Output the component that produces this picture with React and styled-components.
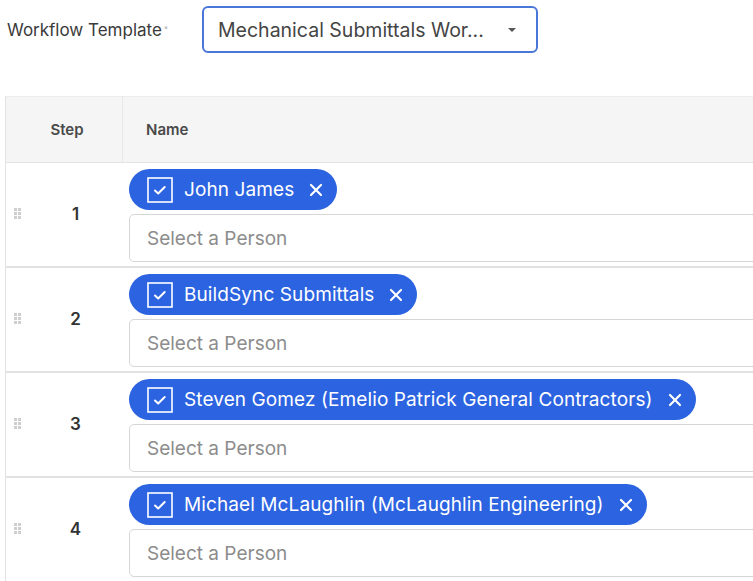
import React from 'react'
import styled, { createGlobalStyle } from 'styled-components'
import { X } from 'lucide-react'

const steps = [
    { step: 1, name: 'John James' },
    { step: 2, name: 'BuildSync Submittals' },
    { step: 3, name: 'Steven Gomez (Emelio Patrick General Contractors)' },
    { step: 4, name: 'Michael McLaughlin (McLaughlin Engineering)' }
]

export default function App() {
    return (
        <>
            <GlobalStyle />
            <Page>
                <TemplateRow>
                    <Label>Workflow Template<Req>*</Req></Label>
                    <Select>
                        <span>Mechanical Submittals Wor...</span>
                        <Caret />
                    </Select>
                </TemplateRow>
                <Table>
                    <HeaderRow>
                        <HeadCell center>Step</HeadCell>
                        <HeadCell>Name</HeadCell>
                    </HeaderRow>
                    {steps.map(({ step, name }) => (
                        <Row key={step}>
                            <StepCell>
                                <Handle>
                                    {Array.from({ length: 6 }).map((_, i) => <i key={i} />)}
                                </Handle>
                                <StepNum>{step}</StepNum>
                            </StepCell>
                            <NameCell>
                                <Chip>
                                    <CheckBox viewBox="0 0 26 26">
                                        <rect x="1" y="1" width="24" height="24" fill="none" stroke="#fff" strokeWidth="1.6" />
                                        <path d="M8 13.5l3.2 3 6.5-6.5" fill="none" stroke="#fff" strokeWidth="2" strokeLinecap="round" strokeLinejoin="round" />
                                    </CheckBox>
                                    <ChipText>{name}</ChipText>
                                    <X size={20} strokeWidth={2.6} color="#fff" />
                                </Chip>
                                <PersonInput>Select a Person</PersonInput>
                            </NameCell>
                        </Row>
                    ))}
                </Table>
            </Page>
        </>
    )
}

const GlobalStyle = createGlobalStyle`
    body{
        margin: 0;
        background: #fff;
        font-family: Inter, "Noto Sans", sans-serif;
        overflow: hidden;
    }
`

const Page = styled.div`
    padding: 6px 0 0 5px;
    width: 820px;
`

const TemplateRow = styled.div`
    display: flex;
    align-items: center;
    margin-bottom: 43px;
`

const Label = styled.div`
    width: 197px;
    padding-left: 2px;
    box-sizing: border-box;
    font-size: 17px;
    color: #3a3a3a;
    display: flex;
    align-items: flex-start;
`

const Req = styled.span`
    font-size: 8px;
    color: #aaa;
    margin-left: 2px;
    margin-top: 4px;
`

const Select = styled.div`
    width: 336px;
    height: 47px;
    box-sizing: border-box;
    border: 2px solid #4a76d8;
    border-radius: 6px;
    display: flex;
    align-items: center;
    justify-content: space-between;
    padding: 0 20px 0 14px;
    font-size: 19.5px;
    color: #444;
    white-space: nowrap;
`

const Caret = styled.span`
    width: 0;
    height: 0;
    border-left: 4px solid transparent;
    border-right: 4px solid transparent;
    border-top: 4px solid #555;
`

const Table = styled.div`
    border-left: 1px solid #e2e2e2;
    border-top: 1px solid #ececec;
`

const HeaderRow = styled.div`
    display: grid;
    grid-template-columns: 116px 1fr;
    height: 65px;
    background: #f5f5f5;
    border-bottom: 1px solid #e4e4e4;
`

const HeadCell = styled.div`
    display: flex;
    align-items: center;
    justify-content: ${({ center }) => center ? 'center' : 'flex-start'};
    padding-left: ${({ center }) => center ? '6px' : '23px'};
    font-size: 15px;
    font-weight: 600;
    color: #4a4a4a;
    & + & {
        border-left: 1px solid #e8e8e8;
    }
`

const Row = styled.div`
    display: grid;
    grid-template-columns: 116px 1fr;
    height: 105px;
    box-sizing: border-box;
    border-bottom: 2px solid #e2e2e2;
`

const StepCell = styled.div`
    display: flex;
    align-items: center;
    padding: 0 0 2px 8px;
`

const Handle = styled.div`
    display: grid;
    grid-template-columns: repeat(2, 3px);
    gap: 1px;
    width: 7px;
    i{
        width: 3px;
        height: 3px;
        background: #cfcfcf;
    }
`

const StepNum = styled.div`
    flex: 1;
    text-align: center;
    padding-left: 8px;
    font-size: 17px;
    font-weight: 600;
    color: #333;
`

const NameCell = styled.div`
    display: flex;
    flex-direction: column;
    align-items: flex-start;
    gap: 4px;
    padding: 6px 0 0 7px;
`

const Chip = styled.div`
    display: flex;
    align-items: center;
    height: 41px;
    box-sizing: border-box;
    padding: 0 11px 0 18px;
    background: #2c63e0;
    border-radius: 21px;
    svg:last-child{
        margin-left: 12px;
    }
`

const CheckBox = styled.svg`
    width: 26px;
    height: 26px;
    flex-shrink: 0;
    margin-right: 11px;
`

const ChipText = styled.span`
    font-size: 19px;
    letter-spacing: 0.1px;
    color: #fff;
    white-space: nowrap;
`

const PersonInput = styled.div`
    align-self: stretch;
    height: 48px;
    box-sizing: border-box;
    border: 1px solid #d6d6d6;
    border-radius: 5px;
    display: flex;
    align-items: center;
    padding-left: 17px;
    font-size: 19px;
    color: #8c8c8c;
`
